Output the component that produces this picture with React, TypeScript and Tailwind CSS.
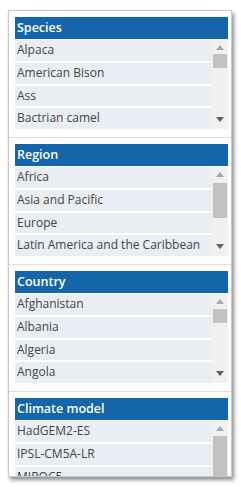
const sections = [
  {
    title: "Species",
    items: ["Alpaca", "American Bison", "Ass", "Bactrian camel", "Barbary sheep"],
    thumbTop: 14,
    thumbHeight: 14,
  },
  {
    title: "Region",
    items: ["Africa", "Asia and Pacific", "Europe", "Latin America and the Caribbean", "Middle East"],
    thumbTop: 16,
    thumbHeight: 35,
  },
  {
    title: "Country",
    items: ["Afghanistan", "Albania", "Algeria", "Angola", "Argentina"],
    thumbTop: 15,
    thumbHeight: 14,
  },
  {
    title: "Climate model",
    items: ["HadGEM2-ES", "IPSL-CM5A-LR", "MIROC5", "GFDL-ESM2M"],
    thumbTop: 15,
    thumbHeight: 60,
  },
];

function ScrollBar({ top, height }: { top: number; height: number }) {
  return (
    <div className="w-[16px] shrink-0 bg-[#f0f0f0] flex flex-col items-center">
      <svg width="8" height="5" viewBox="0 0 8 5" className="mt-[5px] shrink-0">
        <path d="M0 5 L4 0 L8 5 Z" fill="#a8a8a8" />
      </svg>
      <div className="w-full flex-1 flex flex-col items-center">
        <div className="w-[14px] bg-[#c2c2c2]" style={{ marginTop: top - 10, height }} />
      </div>
      <svg width="8" height="5" viewBox="0 0 8 5" className="mb-[7px] shrink-0">
        <path d="M0 0 L8 0 L4 5 Z" fill="#606060" />
      </svg>
    </div>
  );
}

export default function App() {
  return (
    <div className="w-[241px] h-[487px] bg-white pt-[10px] pl-[8px]" style={{ fontFamily: '"Open Sans", sans-serif' }}>
      <div className="w-[224px] h-[467px] bg-white border border-[#c8c8c8] shadow-[2px_3px_4px_rgba(0,0,0,0.45)] overflow-hidden pt-[6px] pl-[6px] pr-[3px] flex flex-col">
        {sections.map((s) => (
          <div key={s.title} className="flex flex-col shrink-0">
            <div className="h-[22px] bg-[#1465a9] text-white text-[12.5px] font-semibold leading-[22px] pl-[2px]">
              {s.title}
            </div>
            <div className="mt-[1px] h-[89px] flex">
              <div className="flex-1 flex flex-col gap-[2px] overflow-hidden">
                {s.items.map((item) => (
                  <div
                    key={item}
                    className="h-[20.75px] shrink-0 bg-[#e9eef5] text-[#444] text-[12px] leading-[20px] pl-[2px] whitespace-nowrap overflow-hidden"
                  >
                    {item}
                  </div>
                ))}
              </div>
              <ScrollBar top={s.thumbTop} height={s.thumbHeight} />
            </div>
            <div className="mt-[8px] mb-[6px] -ml-[6px] -mr-[3px] h-[1px] bg-[#e6ddd5]" />
          </div>
        ))}
      </div>
    </div>
  );
}
